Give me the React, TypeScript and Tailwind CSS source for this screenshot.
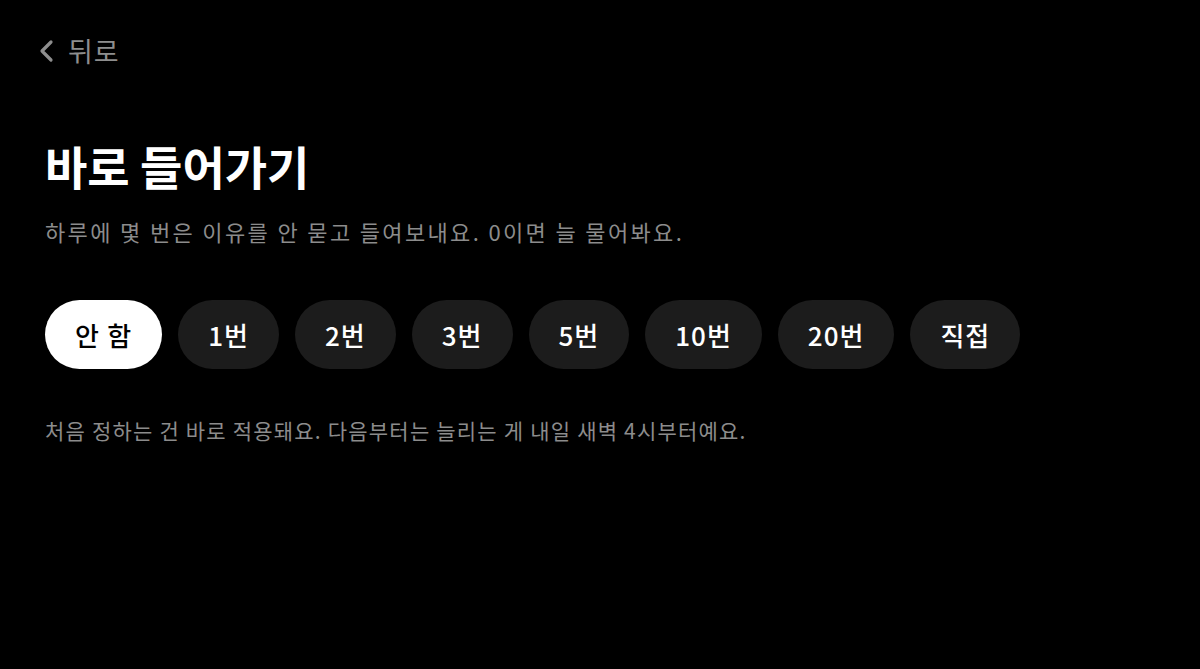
import React from "react";

const options = ["안 함", "1번", "2번", "3번", "5번", "10번", "20번", "직접"];

export default function App() {
  return (
    <div
      className="min-h-[669px] w-full bg-black text-white"
      style={{ fontFamily: '"Noto Sans CJK KR", "Noto Sans", sans-serif' }}
    >
      <div className="px-[45px] pt-[34px]">
        <div className="flex items-center gap-[12px] text-[#8e8e8e]">
          <svg width="20" height="26" viewBox="0 0 20 26" fill="none" className="-ml-[9px]">
            <path d="M15 4 L6 13 L15 22" stroke="#8e8e8e" strokeWidth="3.2" strokeLinecap="round" strokeLinejoin="round" />
          </svg>
          <span className="text-[27px] leading-[34px] tracking-[1px]">뒤로</span>
        </div>

        <h1 className="mt-[69px] text-[46px] font-bold leading-[56px]">바로 들어가기</h1>

        <p className="mt-[23px] text-[22px] leading-[30px] tracking-[2.35px] text-[#8c8c8c]">
          하루에 몇 번은 이유를 안 묻고 들여보내요. 0이면 늘 물어봐요.
        </p>

        <div className="mt-[54px] flex gap-[16px]">
          {options.map((o, i) => (
            <button
              key={o}
              className={
                i === 0
                  ? "h-[69px] rounded-full bg-white px-[30px] text-[26px] font-medium tracking-[1.2px] text-black"
                  : "h-[69px] rounded-full bg-[#1c1c1c] px-[30px] text-[26px] font-medium tracking-[1px] text-white"
              }
            >
              {o}
            </button>
          ))}
        </div>

        <p className="mt-[46px] text-[21px] leading-[30px] tracking-[1.2px] text-[#8c8c8c]">
          처음 정하는 건 바로 적용돼요. 다음부터는 늘리는 게 내일 새벽 4시부터예요.
        </p>
      </div>
    </div>
  );
}
